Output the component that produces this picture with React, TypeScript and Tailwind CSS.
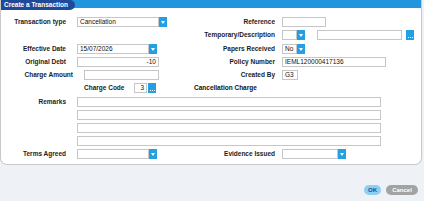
import React from 'react';

const sans = "font-['Liberation_Sans',Arial,sans-serif]";

function Label({ w, children }: { w: string; children: React.ReactNode }) {
  return (
    <span className={`${w} shrink-0 whitespace-nowrap text-right text-[6.5px] font-bold leading-none text-[#1c1c1c]`}>
      {children}
    </span>
  );
}

function Box({ w, children, right }: { w: string; children?: React.ReactNode; right?: boolean }) {
  return (
    <div
      className={`${w} h-[10px] shrink-0 flex items-center border border-[#c6c6c6] bg-white px-[2px] text-[6.5px] leading-none text-[#111] ${
        right ? 'justify-end' : ''
      }`}
    >
      {children}
    </div>
  );
}

function DropBtn() {
  return (
    <div className="w-[8px] h-[10px] shrink-0 flex items-center justify-center bg-[#23a0e4]">
      <svg width="4" height="3" viewBox="0 0 4 3">
        <path d="M0 0h4L2 3z" fill="#fff" />
      </svg>
    </div>
  );
}

function DotBtn() {
  return (
    <div className="w-[8px] h-[10px] shrink-0 flex items-end justify-center pb-[2px] gap-[1px] bg-[#23a0e4]">
      <span className="w-[1px] h-[1px] bg-white" />
      <span className="w-[1px] h-[1px] bg-white" />
      <span className="w-[1px] h-[1px] bg-white" />
    </div>
  );
}

function Row({ children, className = '' }: { children: React.ReactNode; className?: string }) {
  return <div className={`flex items-center h-[10px] ${className}`}>{children}</div>;
}

export default function App() {
  return (
    <div className={`w-[424px] h-[201px] bg-[#eef2f6] ${sans}`}>
      <div className="w-[422px] h-[165px] bg-white border-x border-b border-[#c9c9c9] rounded-b-[7px]">
        {/* title bar */}
        <div className="h-[8px] bg-[#2196dd]">
          <div className="w-[74px] h-[10px] flex items-center pl-[3px] bg-[#1f4a98] rounded-r-[6px] whitespace-nowrap text-[6.5px] font-bold leading-none text-white">
            Create a Transaction
          </div>
        </div>

        <div className="flex flex-col gap-[3px] pt-[9px]">
          <Row>
            <div className="w-[190px] flex items-center">
              <Label w="w-[65px]">Transaction type</Label>
              <div className="ml-[11px] flex">
                <Box w="w-[82px]">Cancellation</Box>
                <DropBtn />
              </div>
            </div>
            <Label w="w-[84px]">Reference</Label>
            <div className="ml-[7px]">
              <Box w="w-[44px]" />
            </div>
          </Row>

          <Row>
            <div className="w-[190px]" />
            <Label w="w-[84px]">Temporary/Description</Label>
            <div className="ml-[7px] flex">
              <Box w="w-[15px]" />
              <DropBtn />
            </div>
            <div className="ml-[12px] flex gap-[4px]">
              <Box w="w-[85px]" />
              <DotBtn />
            </div>
          </Row>

          <Row className="mt-[1px]">
            <div className="w-[190px] flex items-center">
              <Label w="w-[65px]">Effective Date</Label>
              <div className="ml-[11px] flex">
                <Box w="w-[72px]">15/07/2026</Box>
                <DropBtn />
              </div>
            </div>
            <Label w="w-[84px]">Papers Received</Label>
            <div className="ml-[7px] flex">
              <Box w="w-[15px]">No</Box>
              <DropBtn />
            </div>
          </Row>

          <Row>
            <div className="w-[190px] flex items-center">
              <Label w="w-[65px]">Original Debt</Label>
              <div className="ml-[11px]">
                <Box w="w-[82px]" right>
                  -10
                </Box>
              </div>
            </div>
            <Label w="w-[84px]">Policy Number</Label>
            <div className="ml-[7px]">
              <Box w="w-[104px]">IEML120000417136</Box>
            </div>
          </Row>

          <Row>
            <div className="w-[190px] flex items-center">
              <Label w="w-[72px]">Charge Amount</Label>
              <div className="ml-[11px]">
                <Box w="w-[75px]" />
              </div>
            </div>
            <Label w="w-[84px]">Created By</Label>
            <div className="ml-[7px]">
              <Box w="w-[16px]">G3</Box>
            </div>
          </Row>

          <Row>
            <div className="w-[193px] flex items-center pl-[83px]">
              <span className="w-[50px] text-[6.5px] font-bold leading-none text-[#1c1c1c]">Charge Code</span>
              <div className="flex gap-[1px]">
                <Box w="w-[13px]" right>
                  3
                </Box>
                <DotBtn />
              </div>
            </div>
            <span className="text-[6.5px] font-bold leading-none text-[#111]">Cancellation Charge</span>
          </Row>

          <Row className="mt-[1px]">
            <Label w="w-[65px]">Remarks</Label>
            <div className="ml-[11px]">
              <Box w="w-[304px]" />
            </div>
          </Row>
          {[0, 1, 2].map((i) => (
            <Row key={i}>
              <div className="ml-[76px]">
                <Box w="w-[304px]" />
              </div>
            </Row>
          ))}

          <Row>
            <div className="w-[190px] flex items-center">
              <Label w="w-[65px]">Terms Agreed</Label>
              <div className="ml-[11px] flex">
                <Box w="w-[72px]" />
                <DropBtn />
              </div>
            </div>
            <Label w="w-[84px]">Evidence Issued</Label>
            <div className="ml-[7px] flex">
              <Box w="w-[56px]" />
              <DropBtn />
            </div>
          </Row>
        </div>
      </div>

      <div className="flex justify-end gap-[5px] pr-[6px] mt-[20px]">
        <button className="w-[17px] h-[10px] rounded-full bg-[#8ccff3] text-[6px] font-bold leading-none text-[#1f4a98]">
          OK
        </button>
        <button className="w-[32px] h-[10px] rounded-full bg-[#a3a3a3] text-[6px] font-bold leading-none text-white">
          Cancel
        </button>
      </div>
    </div>
  );
}
